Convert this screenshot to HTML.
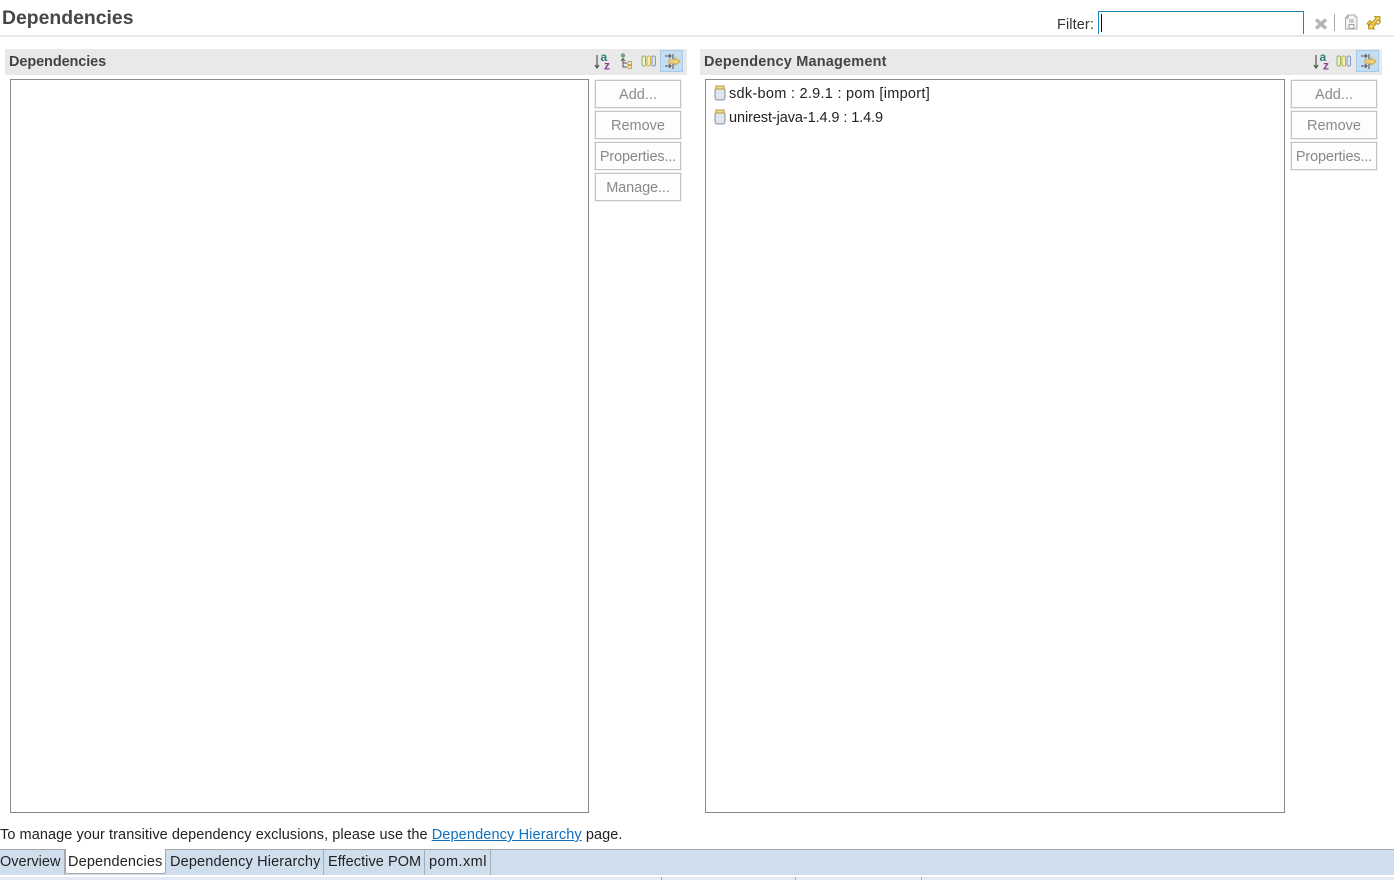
<!DOCTYPE html>
<html><head><meta charset="utf-8"><style>
html,body{margin:0;padding:0;background:#fff}
body{width:1394px;height:880px;position:relative;overflow:hidden;font-family:"Liberation Sans",sans-serif;font-size:14.5px;color:#222}
.a{position:absolute;white-space:nowrap}
.hdr{position:absolute;top:49px;height:26px;background:#e9e9e9}
.h{position:absolute;top:53px;font-weight:bold;font-size:14.5px;color:#444;line-height:18px;white-space:nowrap}
.box{position:absolute;top:79px;height:732px;border:1px solid #8a8a8a;box-sizing:content-box;background:#fff}
.btn{position:absolute;width:84px;height:26px;border:1px solid #c4c4c4;outline:1px solid #efefef;color:#8a8a8a;text-align:center;line-height:29px;font-size:14.5px;background:#fdfdfd;white-space:nowrap}
.tab{position:absolute;top:849px;height:26px;line-height:27px;font-size:14.5px;color:#222;white-space:nowrap;border-right:1px solid #a3adb8;box-sizing:border-box}
svg{position:absolute;overflow:visible}
</style></head><body>
<div class="a" style="left:2px;top:6px;font-size:19.4px;font-weight:bold;color:#474747;line-height:24px">Dependencies</div>
<div class="a" style="left:0;top:35px;width:1394px;height:2px;background:#e8e8e8"></div>
<div class="a" style="left:1057px;top:16px;line-height:18px;color:#333;letter-spacing:.1px">Filter:</div>
<div class="a" style="left:1098px;top:11px;width:204px;height:22px;border:1px solid #1f86b8;border-bottom:0"></div>
<div class="a" style="left:1101px;top:14px;width:1px;height:18px;background:#111"></div>

<svg style="left:1314px;top:17px" width="14" height="14" viewBox="0 0 14 14"><path d="M2 2.5L12 11.5M12 2.5L2 11.5" stroke="#b5b5b5" stroke-width="3.4"/></svg>
<div class="a" style="left:1334px;top:14px;width:1px;height:17px;background:#a8a8a8"></div>
<svg style="left:1343px;top:14px" width="16" height="16" viewBox="0 0 16 16"><path d="M5 1H12V3H14V15H2.500V4Z" fill="#f6f6f6" stroke="#a9a9a9"/><path d="M5 1V4H2.500M6 6H11M6 8H11M6 10.500H11V14.500H6Z" fill="none" stroke="#a0a0a0"/></svg>
<svg style="left:1366px;top:14px" width="16" height="16" viewBox="0 0 16 16"><path d="M1 9.500L4 6.500L6 8.500L10 4L8.500 2.500H14V7.500L12.500 6L7 11.500L4.500 9.500L3 11.500Z" fill="#f3cd4c" stroke="#a98416" stroke-width=".8"/><path d="M15 7.500L12 10.500L10.500 9.500L7 13.500L8.500 15H2.500V10.500L4 12" fill="#f3cd4c" stroke="#a98416" stroke-width=".8"/></svg>

<div class="hdr" style="left:5px;width:682px"></div>
<div class="hdr" style="left:700px;width:682px"></div>
<div class="h" style="left:9px;letter-spacing:-.1px">Dependencies</div>
<div class="h" style="left:704px;letter-spacing:.18px">Dependency Management</div>

<!-- sort icons -->
<svg style="left:594px;top:52px" width="18" height="18" viewBox="0 0 18 18"><path d="M3 3V16M1 13L3 16L5 13" fill="none" stroke="#555" stroke-width="1.200"/><text x="6.500" y="9" font-family="Liberation Sans" font-weight="bold" font-size="12" fill="#2f7f73">a</text><text x="10" y="17.500" font-family="Liberation Sans" font-weight="bold" font-size="12" fill="#8a3f96">z</text></svg>
<svg style="left:618px;top:53px" width="16" height="18" viewBox="0 0 16 18"><circle cx="5" cy="2.500" r="2.200" fill="#6fa56f"/><path d="M5 6V14H9M5 10H9M3 8L5 5.500L7 8" fill="none" stroke="#555"/><rect x="10" y="8.500" width="3.500" height="3" fill="none" stroke="#c9a53a"/><rect x="10" y="12.500" width="3.500" height="3" fill="none" stroke="#c9a53a"/></svg>
<svg style="left:641px;top:55px" width="16" height="12" viewBox="0 0 16 12"><rect x="1" y="1" width="3.500" height="10" rx="1.500" fill="#f2f1c8" stroke="#8fb36a"/><rect x="6" y="1" width="3.500" height="10" rx="1.500" fill="#f6efb5" stroke="#cdb24a"/><rect x="11" y="1" width="3.500" height="10" rx="1.500" fill="#dfe6f2" stroke="#7e9cc4"/></svg>
<div class="a" style="left:660px;top:50px;width:23px;height:22px;background:#c4ddf3;border:1px solid #a5cbea;box-sizing:border-box"></div>
<svg style="left:664px;top:53px" width="18" height="17" viewBox="0 0 18 17"><path d="M1 3H7M5 1L7 3L5 5M9 1V6M1 13H7M5 11L7 13L5 15M9 11V16" fill="none" stroke="#555"/><path d="M5 7H11V5L16 8.500L11 12V10H5Z" fill="#f6dc85" stroke="#c9a53a"/></svg>

<svg style="left:1313px;top:52px" width="18" height="18" viewBox="0 0 18 18"><path d="M3 3V16M1 13L3 16L5 13" fill="none" stroke="#555" stroke-width="1.200"/><text x="6.500" y="9" font-family="Liberation Sans" font-weight="bold" font-size="12" fill="#2f7f73">a</text><text x="10" y="17.500" font-family="Liberation Sans" font-weight="bold" font-size="12" fill="#8a3f96">z</text></svg>
<svg style="left:1336px;top:55px" width="16" height="12" viewBox="0 0 16 12"><rect x="1" y="1" width="3.500" height="10" rx="1.500" fill="#f2f1c8" stroke="#8fb36a"/><rect x="6" y="1" width="3.500" height="10" rx="1.500" fill="#f6efb5" stroke="#cdb24a"/><rect x="11" y="1" width="3.500" height="10" rx="1.500" fill="#dfe6f2" stroke="#7e9cc4"/></svg>
<div class="a" style="left:1356px;top:50px;width:23px;height:22px;background:#c4ddf3;border:1px solid #a5cbea;box-sizing:border-box"></div>
<svg style="left:1360px;top:53px" width="18" height="17" viewBox="0 0 18 17"><path d="M1 3H7M5 1L7 3L5 5M9 1V6M1 13H7M5 11L7 13L5 15M9 11V16" fill="none" stroke="#555"/><path d="M5 7H11V5L16 8.500L11 12V10H5Z" fill="#f6dc85" stroke="#c9a53a"/></svg>

<div class="box" style="left:10px;width:577px"></div>
<div class="box" style="left:705px;width:578px"></div>

<div class="btn" style="left:595px;top:80px">Add...</div>
<div class="btn" style="left:595px;top:111px">Remove</div>
<div class="btn" style="left:595px;top:142px;letter-spacing:-.15px">Properties...</div>
<div class="btn" style="left:595px;top:173px;letter-spacing:-.1px">Manage...</div>
<div class="btn" style="left:1291px;top:80px">Add...</div>
<div class="btn" style="left:1291px;top:111px">Remove</div>
<div class="btn" style="left:1291px;top:142px;letter-spacing:-.15px">Properties...</div>

<svg style="left:713.500px;top:85px" width="12" height="16" viewBox="0 0 12 16"><rect x="1" y="3" width="10" height="12" rx="2.500" fill="#dfe6ee" stroke="#7f8c99"/><rect x="2" y="1" width="8" height="3" fill="#f2dc8a" stroke="#b59a3a"/></svg>
<svg style="left:713.500px;top:109px" width="12" height="16" viewBox="0 0 12 16"><rect x="1" y="3" width="10" height="12" rx="2.500" fill="#dfe6ee" stroke="#7f8c99"/><rect x="2" y="1" width="8" height="3" fill="#f2dc8a" stroke="#b59a3a"/></svg>
<div class="a" style="left:729px;top:85px;line-height:18px;color:#222;letter-spacing:.28px">sdk-bom : 2.9.1 : pom [import]</div>
<div class="a" style="left:729px;top:109px;line-height:18px;color:#222;letter-spacing:-.09px">unirest-java-1.4.9 : 1.4.9</div>

<div class="a" style="left:0;top:826px;line-height:18px;color:#222;letter-spacing:.07px">To manage your transitive dependency exclusions, please use the <span style="color:#0f6fc0;text-decoration:underline;letter-spacing:.13px">Dependency Hierarchy</span> page.</div>

<div class="a" style="left:0;top:849px;width:1394px;height:1px;background:#a8a8a8"></div>
<div class="a" style="left:0;top:850px;width:1394px;height:25px;background:#cfdeec"></div>
<div class="a" style="left:0;top:875px;width:1394px;height:2px;background:#fff"></div>
<div class="a" style="left:0;top:877px;width:1394px;height:3px;background:#e3eaf5"></div>
<div class="a" style="left:661px;top:877px;width:1px;height:3px;background:#a9b1bb"></div>
<div class="a" style="left:795px;top:877px;width:1px;height:3px;background:#a9b1bb"></div>
<div class="a" style="left:921px;top:877px;width:1px;height:3px;background:#a9b1bb"></div>

<div class="tab" style="left:0;width:65px">Overview</div>
<div class="a" style="left:65px;top:849px;width:101px;height:25px;background:#fff;border:1px solid #a5a5a5;border-top:0;border-radius:0 0 3px 3px;box-sizing:border-box;line-height:27px;padding-left:2px;color:#222;letter-spacing:.15px">Dependencies</div>
<div class="tab" style="left:166px;width:158px;padding-left:4px;letter-spacing:.15px">Dependency Hierarchy</div>
<div class="tab" style="left:324px;width:101px;padding-left:4px;letter-spacing:.06px">Effective POM</div>
<div class="tab" style="left:425px;width:66px;padding-left:4px;letter-spacing:.44px">pom.xml</div>
</body></html>
